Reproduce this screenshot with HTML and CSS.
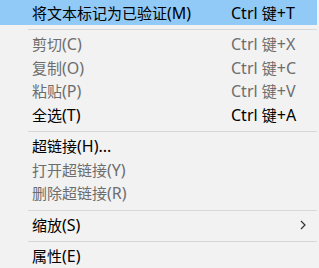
FILE: index.html
```html
<!DOCTYPE html>
<html lang="zh-CN">

<head>
    <meta charset="UTF-8">
    <title>右键菜单</title>
    <link rel="stylesheet" href="styles.css">
</head>

<body>
    <div class="menu">
        <div class="menu_item menu_item_active menu_item_first">
            <span class="menu_label"><span class="zh">将文本标记为已验证</span>(M)</span>
            <span class="menu_key">Ctrl <span class="zh">键</span>+T</span>
        </div>
        <div class="menu_sep"></div>
        <div class="menu_item menu_item_disabled">
            <span class="menu_label"><span class="zh">剪切</span>(C)</span>
            <span class="menu_key">Ctrl <span class="zh">键</span>+X</span>
        </div>
        <div class="menu_item menu_item_disabled">
            <span class="menu_label"><span class="zh">复制</span>(O)</span>
            <span class="menu_key">Ctrl <span class="zh">键</span>+C</span>
        </div>
        <div class="menu_item menu_item_disabled">
            <span class="menu_label"><span class="zh">粘贴</span>(P)</span>
            <span class="menu_key">Ctrl <span class="zh">键</span>+V</span>
        </div>
        <div class="menu_item">
            <span class="menu_label"><span class="zh">全选</span>(T)</span>
            <span class="menu_key">Ctrl <span class="zh">键</span>+A</span>
        </div>
        <div class="menu_sep"></div>
        <div class="menu_item">
            <span class="menu_label"><span class="zh">超链接</span>(H)...</span>
        </div>
        <div class="menu_item menu_item_disabled">
            <span class="menu_label"><span class="zh">打开超链接</span>(Y)</span>
        </div>
        <div class="menu_item menu_item_disabled">
            <span class="menu_label"><span class="zh">删除超链接</span>(R)</span>
        </div>
        <div class="menu_sep"></div>
        <div class="menu_item">
            <span class="menu_label"><span class="zh">缩放</span>(S)</span>
            <svg class="menu_arrow" width="6" height="10" viewBox="0 0 6 10">
                <path d="M1 1 L5 5 L1 9" fill="none" stroke="#333" stroke-width="1.2" />
            </svg>
        </div>
        <div class="menu_sep"></div>
        <div class="menu_item">
            <span class="menu_label"><span class="zh">属性</span>(E)</span>
        </div>
    </div>
</body>

</html>
```

FILE: styles.css
```css
* {
    box-sizing: border-box;
}

body {
    margin: 0;
    background-color: #f2f2f2;
    font-family: "Noto Sans", "Noto Sans CJK SC", sans-serif;
    font-size: 16px;
    color: #000;
}

.menu {
    width: 317px;
}

.menu_item {
    display: grid;
    grid-template-columns: 199px 1fr;
    align-items: center;
    height: 23.5px;
    padding-left: 32px;
    line-height: 23.5px;
    white-space: nowrap;
}

/* CJK glyphs in the original are a bit smaller than the latin ones */
.zh {
    font-size: 15px;
}

.menu_item_first {
    height: 25px;
    padding-top: 1.5px;
}

.menu_item_active {
    background-color: #91c9f7;
}

.menu_item_disabled {
    color: #6d6d6d;
}

.menu_arrow {
    justify-self: end;
    margin-right: 11px;
}

.menu_sep {
    height: 1px;
    margin: 4px 0 3px 28px;
    background-color: #d7d7d7;
}
```
